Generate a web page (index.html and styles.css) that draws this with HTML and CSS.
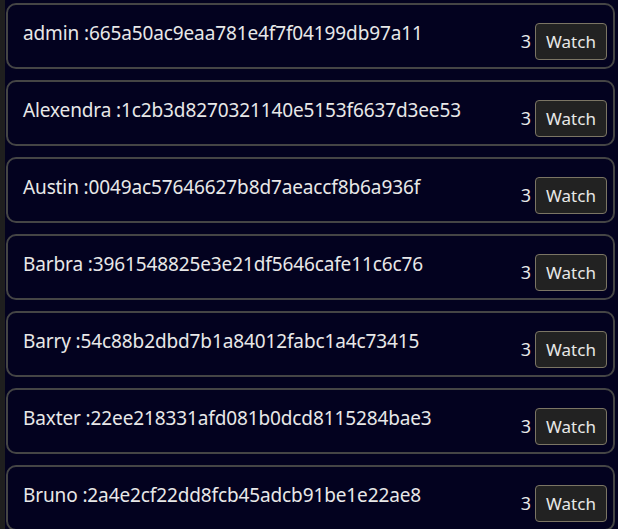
FILE: index.html
```html
<!DOCTYPE html>
<html>
<head>
<meta charset="utf-8">
<link rel="stylesheet" href="styles.css">
</head>
<body>
<div class="list">
  <div class="card"><div class="name">admin :665a50ac9eaa781e4f7f04199db97a11</div><div class="actions"><span class="count">3</span><button class="watch">Watch</button></div></div>
  <div class="card"><div class="name">Alexendra :1c2b3d8270321140e5153f6637d3ee53</div><div class="actions"><span class="count">3</span><button class="watch">Watch</button></div></div>
  <div class="card"><div class="name">Austin :0049ac57646627b8d7aeaccf8b6a936f</div><div class="actions"><span class="count">3</span><button class="watch">Watch</button></div></div>
  <div class="card"><div class="name">Barbra :3961548825e3e21df5646cafe11c6c76</div><div class="actions"><span class="count">3</span><button class="watch">Watch</button></div></div>
  <div class="card"><div class="name">Barry :54c88b2dbd7b1a84012fabc1a4c73415</div><div class="actions"><span class="count">3</span><button class="watch">Watch</button></div></div>
  <div class="card"><div class="name">Baxter :22ee218331afd081b0dcd8115284bae3</div><div class="actions"><span class="count">3</span><button class="watch">Watch</button></div></div>
  <div class="card"><div class="name">Bruno :2a4e2cf22dd8fcb45adcb91be1e22ae8</div><div class="actions"><span class="count">3</span><button class="watch">Watch</button></div></div>
</div>
</body>
</html>
```
FILE: styles.css
```css
html, body {
  margin: 0;
  padding: 0;
  background: #1f1f1f;
  height: 100%;
  overflow: hidden;
}
.list {
  margin-left: 5px;
  background: #03021f;
  padding: 3px 3px 0 1px;
  display: flex;
  flex-direction: column;
  gap: 11px;
  min-height: 100%;
  font-family: "Noto Sans", sans-serif;
  color: #e8e8e8;
}
.card {
  flex: none;
  height: 62px;
  border: 2px solid #454545;
  border-radius: 10px;
  display: flex;
  justify-content: space-between;
  padding: 0 6px 0 15px;
}
.name {
  font-size: 19px;
  line-height: 24px;
  letter-spacing: -0.12px;
  padding-top: 16px;
}
.actions {
  display: flex;
  align-items: center;
  gap: 4px;
  align-self: flex-end;
  margin-bottom: 7px;
}
.count {
  font-size: 18px;
  line-height: 20px;
  margin-bottom: 2px;
}
.watch {
  font-family: "Noto Sans", sans-serif;
  font-size: 17px;
  color: #e8e8e8;
  background: #222222;
  border: 1px solid #7b7564;
  border-radius: 4px;
  height: 37px;
  width: 72px;
  padding: 0;
}
```
